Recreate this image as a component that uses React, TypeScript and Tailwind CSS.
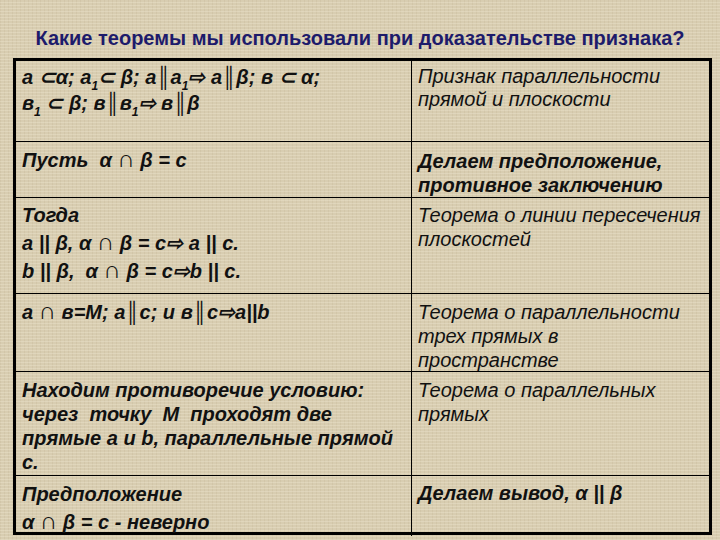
import React from "react";

const font = { fontFamily: '"Liberation Sans", Arial, sans-serif' };

function Sub({ children }: { children: React.ReactNode }) {
  return <sub className="text-[12px] align-[-3px]">{children}</sub>;
}

function Cap() {
  return <span className="text-[24px] leading-[0] not-italic font-bold">∩</span>;
}

export default function App() {
  return (
    <div
      className="w-[720px] h-[540px] bg-[#d8cdb1] bg-[repeating-linear-gradient(0deg,rgba(240,232,210,0.35)_0px,rgba(240,232,210,0.35)_1px,transparent_1px,transparent_3px),repeating-linear-gradient(90deg,rgba(140,115,70,0.08)_0px,rgba(140,115,70,0.08)_1px,transparent_1px,transparent_4px)] text-[#111] whitespace-nowrap"
      style={font}
    >
      {/* Title */}
      <div className="h-[58px] pt-[26px] text-center text-[20px] leading-[24px] font-bold text-[#1d1b6b]">
        Какие теоремы мы использовали при доказательстве признака?
      </div>

      {/* Table */}
      <div className="mx-[13px] w-[699px] border-[3px] border-black grid grid-cols-[396px_1fr] grid-rows-[81px_56px_96px_78px_104px_1fr] h-[477px]">
        {/* row 1 */}
        <div className="border-r border-b border-black pl-[6px] pt-[3px] text-[20px] leading-[26px] font-bold italic">
          <div>
            a ⊂α; a<Sub>1</Sub>⊂ β; a║a<Sub>1</Sub>⇨ a║β; в ⊂ α;
          </div>
          <div>
            в<Sub>1</Sub> ⊂ β; в║в<Sub>1</Sub>⇨ в║β
          </div>
        </div>
        <div className="border-b border-black pl-[6px] pt-[4px] text-[20px] leading-[23px] italic">
          Признак параллельности
          <br />
          прямой и плоскости
        </div>

        {/* row 2 */}
        <div className="border-r border-b border-black pl-[6px] pt-[6px] text-[20px] leading-[24px] font-bold italic">
          Пусть&nbsp; α <Cap /> β = c
        </div>
        <div className="border-b border-black pl-[6px] pt-[7px] text-[20px] leading-[24px] font-bold italic">
          Делаем предположение,
          <br />
          противное заключению
        </div>

        {/* row 3 */}
        <div className="border-r border-b border-black pl-[6px] pt-[3px] text-[20px] leading-[28px] font-bold italic">
          Тогда
          <br />
          a || β, α <Cap /> β = c⇨ a || c.
          <br />
          b || β,&nbsp; α <Cap /> β = c⇨b || c.
        </div>
        <div className="border-b border-black pl-[6px] pt-[5px] text-[20px] leading-[24px] italic">
          Теорема о линии пересечения
          <br />
          плоскостей
        </div>

        {/* row 4 */}
        <div className="border-r border-b border-black pl-[6px] pt-[6px] text-[20px] leading-[24px] font-bold italic">
          a <Cap /> в=M; a║c; и в║c⇨a||b
        </div>
        <div className="border-b border-black pl-[6px] pt-[6px] text-[20px] leading-[24px] italic">
          Теорема о параллельности
          <br />
          трех прямых в
          <br />
          пространстве
        </div>

        {/* row 5 */}
        <div className="border-r border-b border-black pl-[6px] pt-[6px] text-[20px] leading-[24px] font-bold italic">
          Находим противоречие условию:
          <br />
          через&nbsp; точку&nbsp; М&nbsp; проходят две
          <br />
          прямые a и b, параллельные прямой
          <br />
          c.
        </div>
        <div className="border-b border-black pl-[6px] pt-[6px] text-[20px] leading-[24px] italic">
          Теорема о параллельных
          <br />
          прямых
        </div>

        {/* row 6 */}
        <div className="border-r border-black pl-[6px] pt-[4px] text-[20px] leading-[28px] font-bold italic">
          Предположение
          <br />
          α <Cap /> β = c - неверно
        </div>
        <div className="pl-[6px] pt-[5px] text-[20px] leading-[24px] font-bold italic">
          Делаем вывод, α || β
        </div>
      </div>
    </div>
  );
}
